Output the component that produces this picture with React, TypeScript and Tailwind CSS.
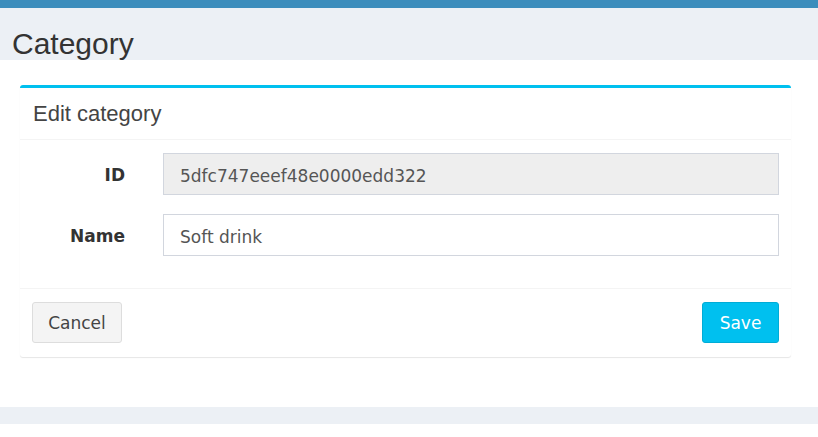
const bodyFont = "font-['DejaVu_Sans',Verdana,sans-serif]"
const headFont = "font-['Liberation_Sans',Arial,sans-serif]"

function FieldRow({ label, value, disabled }: { label: string; value: string; disabled?: boolean }) {
  return (
    <div className="flex items-center">
      <label className="w-[105px] shrink-0 pt-[4px] text-right font-bold text-[#333]">{label}</label>
      <input
        readOnly
        defaultValue={value}
        className={`ml-[38px] mr-[12px] h-[42px] flex-1 border border-[#d2d6de] px-[16px] pt-[4px] text-[#555] outline-none ${
          disabled ? 'bg-[#eeeeee]' : 'bg-white'
        }`}
      />
    </div>
  )
}

export default function App() {
  return (
    <div className={`${bodyFont} min-h-screen bg-white text-[17px]`}>
      <div className="h-[8px] bg-[#3c8dbc]" />
      <div className="h-[52px] bg-[#ecf0f5] pl-[12px] pt-[19px]">
        <h1 className={`${headFont} text-[30px] leading-[33px] text-[#333]`}>Category</h1>
      </div>

      <div className="h-[347px] bg-white pt-[25px]">
        <div className="ml-[20px] w-[771px] rounded-[3px] border-t-[3px] border-[#00c0ef] bg-white shadow-[0_1px_1px_rgba(0,0,0,0.1)]">
          <div className="flex h-[52px] items-center border-b border-[#f4f4f4] px-[13px]">
            <h3 className={`${headFont} text-[22px] leading-[22px] text-[#444]`}>Edit category</h3>
          </div>
          <div className="flex flex-col gap-[19px] pb-[32px] pt-[13px]">
            <FieldRow label="ID" value="5dfc747eeef48e0000edd322" disabled />
            <FieldRow label="Name" value="Soft drink" />
          </div>
          <div className="flex items-center justify-between border-t border-[#f4f4f4] px-[12px] pb-[14px] pt-[13px]">
            <button className="h-[41px] w-[90px] rounded-[3px] border border-[#ddd] bg-[#f4f4f4] pt-[2px] text-[#444]">
              Cancel
            </button>
            <button className="h-[41px] w-[77px] rounded-[3px] border border-[#00acd6] bg-[#00c0ef] pt-[2px] text-white">
              Save
            </button>
          </div>
        </div>
      </div>

      <div className="h-[17px] bg-[#ecf0f5]" />
    </div>
  )
}
